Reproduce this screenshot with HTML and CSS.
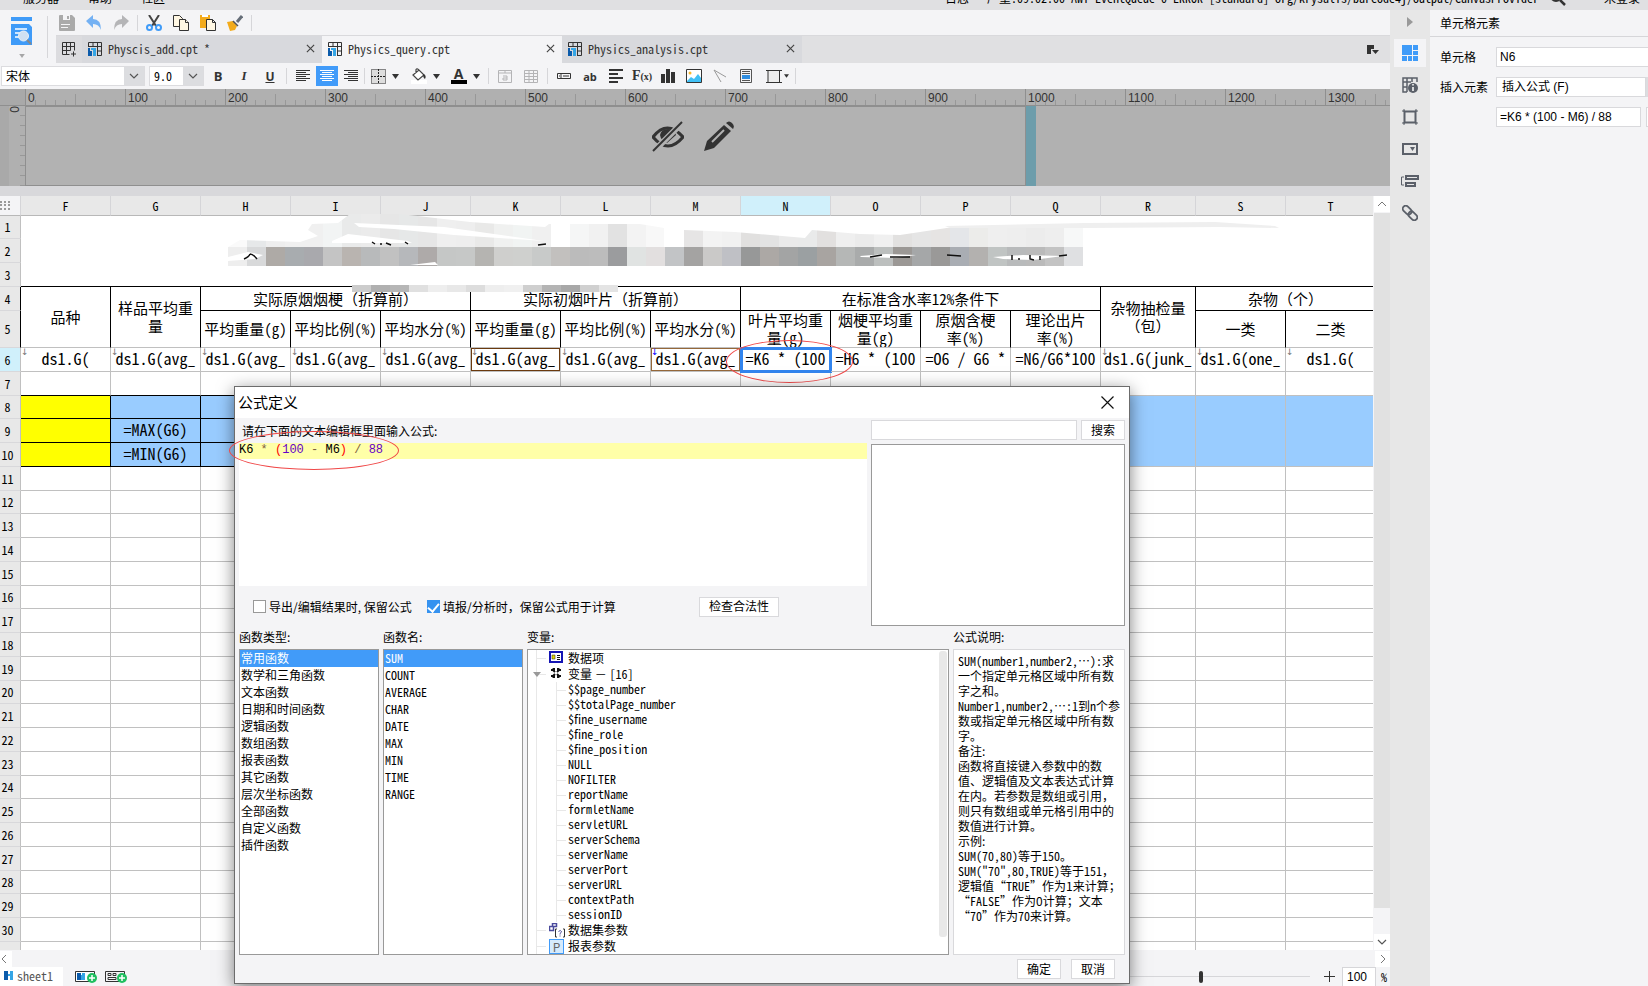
FILE: index.html
```html
<!DOCTYPE html>
<html lang="zh-CN">
<head>
  <meta charset="UTF-8">
  <meta name="viewport" content="width=device-width, initial-scale=1.0">
  <title>Physics_query.cpt</title>
  <link rel="stylesheet" href="styles.css">
</head>
<body>
  <!-- Shared icons -->
  <svg class="defs" width="0" height="0">
    <symbol id="i-cpt" viewBox="0 0 14 14">
      <path d="M.5 5V.5h13v13H9M.5 4.5h13M5 .5v4M9.500.5v13M9 9h4.500" fill="none" stroke="#333" />
      <path d="M0 6h2v3h2v5H0z" fill="#0b5bab" /><path d="M3 6h5v8H5V8H3z" fill="#35a5e5" />
    </symbol>
    <symbol id="i-close" viewBox="0 0 10 10"><path d="M1 1l8 8M9 1L1 9" fill="none" stroke="#444" stroke-width="1.3" /></symbol>
    <symbol id="i-caret" viewBox="0 0 7 5"><path d="M0 0h7L3.500 5z" fill="#333" /></symbol>
    <symbol id="i-down" viewBox="0 0 10 6"><path d="M1 1l4 4 4-4" fill="none" stroke="#555" stroke-width="1.2" /></symbol>
    <symbol id="i-plus" viewBox="0 0 10 10"><circle cx="5" cy="5" r="5" fill="#1fbf5f" /><path d="M5 2v6M2 5h6" stroke="#fff" stroke-width="1.5" /></symbol>
  </svg>

  <div class="app">
    <div class="menubar">
      <div class="menu-line">
        <nav class="menus"><span>服务器</span><span>帮助</span><span>社区</span></nav>
        <span class="log half">日志 &nbsp; 严重:09:02:00 AWT-EventQueue-0 ERROR [standard] org/krysalis/barcode4j/output/CanvasProvider</span>
        <svg class="menu-search" width="16" height="16"><circle cx="6" cy="6" r="5" fill="none" stroke="#333" stroke-width="2" /><path d="M10 10l5 5" stroke="#333" stroke-width="2.500" /></svg>
        <span class="login">未登录</span>
      </div>
    </div>

    <div class="main">
      <div class="workspace">
        <!-- Toolbar and tabs -->
        <div class="top">
          <button type="button" class="preview" aria-label="预览">
            <svg width="22" height="30" viewBox="0 0 22 30">
              <path d="M0 0h21v4H0zM0 7h18l3 3v18H0z" fill="#3f9bf8" /><path d="M4 12h12M4 16h6M4 20h4" stroke="#fff" stroke-width="1.5" />
              <circle cx="12.500" cy="19" r="5" fill="#cfe0f2" stroke="#e9f1f8" /><path d="M16 23l4 4" stroke="#888" stroke-width="2" />
            </svg>
            <svg class="caret-light" width="6" height="4"><use href="#i-caret" /></svg>
          </button>
          <div class="top-right">
            <div class="toolbar">
              <button type="button" aria-label="保存"><svg width="16" height="16"><path d="M0 1q0-1 1-1h12l3 3v12q0 1-1 1H1q-1 0-1-1z" fill="#aaa" /><path d="M4 0h7v5H4zM2 9h9v1H2zM2 12h7v1H2z" fill="#f4f4f6" /><path d="M8 1h2v3H8z" fill="#aaa" /></svg></button>
              <button type="button" aria-label="撤销"><svg width="16" height="16"><path d="M0 6l7-6v4q8 0 8 11-2-6-8-6v4z" fill="#74b1f3" /></svg></button>
              <button type="button" aria-label="重做"><svg width="16" height="16"><path d="M16 6L9 0v4Q1 4 1 15q2-6 8-6v4z" fill="#b5b5b7" /></svg></button>
              <i class="sep"></i>
              <button type="button" aria-label="剪切"><svg width="16" height="16" fill="none"><path d="M3 0l7 11M13 0L6 11" stroke="#444" stroke-width="2" /><circle cx="3.500" cy="12.500" r="2.500" stroke="#3f9bf8" stroke-width="2" /><circle cx="12.500" cy="12.500" r="2.500" stroke="#3f9bf8" stroke-width="2" /></svg></button>
              <button type="button" aria-label="复制"><svg width="16" height="16" fill="#fff7e3" stroke="#333"><path d="M.5.5h6l3 3v8h-9z" /><path d="M6.500 4.500h6l3 3v8h-9z" /><path d="M12.500 4.500v3h3" /></svg></button>
              <button type="button" aria-label="粘贴"><svg width="16" height="16"><path d="M0 0h10v13H0z" fill="#f3ab1b" /><path d="M2 0h6v2H2z" fill="#fff" /><path d="M6.500 4.500h6l3 3v8h-9zM12.500 4.500v3h3" fill="#fff7e3" stroke="#333" /></svg></button>
              <button type="button" aria-label="格式刷"><svg width="16" height="16"><path d="M15 1l-5 6" stroke="#666e78" stroke-width="3" /><path d="M0 7l6-1 4 5-2 4-5 1-1-3z" fill="#f3ab1b" /><path d="M6 6l5 5" stroke="#555" stroke-width="1.500" /></svg></button>
              <i class="sep"></i>
            </div>
            <div class="tabs">
              <button type="button" class="tab-add" aria-label="新建"><svg width="15" height="15" fill="none" stroke="#333"><path d="M.5.5h12v8M.5.5v12h7M.5 4.500h12M.5 8.500h8M4.500.5v12M8.500.5v8M11.500 9.500v5M9 12h5" /></svg></button>
              <div class="tab"><svg width="14" height="14"><use href="#i-cpt" /></svg><span class="half">Physcis_add.cpt *</span><svg class="x" width="9" height="9"><use href="#i-close" /></svg></div>
              <div class="tab active"><svg width="14" height="14"><use href="#i-cpt" /></svg><span class="half">Physics_query.cpt</span><svg class="x" width="9" height="9"><use href="#i-close" /></svg></div>
              <div class="tab"><svg width="14" height="14"><use href="#i-cpt" /></svg><span class="half">Physics_analysis.cpt</span><svg class="x" width="9" height="9"><use href="#i-close" /></svg></div>
              <svg class="tab-list" width="12" height="10"><path d="M0 0h7v4H4v5H0z" fill="#333" /><path d="M5 5h7l-3.500 4z" fill="#333" /></svg>
            </div>
          </div>
        </div>

        <!-- Format bar -->
        <div class="format">
          <div class="combo font-name"><select aria-label="字体"><option>宋体</option></select><svg width="10" height="6"><use href="#i-down" /></svg></div>
          <div class="combo font-size"><select class="half" aria-label="字号"><option>9.0</option></select><svg width="10" height="6"><use href="#i-down" /></svg></div>
          <button type="button" class="bold">B</button>
          <button type="button" class="italic">I</button>
          <button type="button" class="underline">U</button>
          <i class="sep"></i>
          <button type="button" aria-label="左对齐"><svg width="14" height="12" stroke="#333"><path d="M0 .5h14M0 2.500h10M0 4.500h14M0 6.500h10M0 8.500h14M0 10.500h10" /></svg></button>
          <button type="button" class="on" aria-label="居中"><svg width="14" height="12" stroke="#fff"><path d="M0 .5h14M2 2.500h10M0 4.500h14M2 6.500h10M0 8.500h14M2 10.500h10" /></svg></button>
          <button type="button" aria-label="右对齐"><svg width="14" height="12" stroke="#333"><path d="M0 .5h14M4 2.500h10M0 4.500h14M4 6.500h10M0 8.500h14M4 10.500h10" /></svg></button>
          <i class="sep tight"></i>
          <button type="button" class="wide" aria-label="边框"><svg width="15" height="15"><path d="M.5.5h14v14H.5z" fill="#ddd" stroke="#222" stroke-dasharray="1 1" /><path d="M7.500 0v15M0 7.500h15" stroke="#222" stroke-dasharray="2 1" /></svg><svg width="7" height="5"><use href="#i-caret" /></svg></button>
          <button type="button" class="wide" aria-label="填充"><svg width="16" height="16"><path d="M0 12h16v4H0z" fill="#fff" /><path d="M2 7l6-5 5 5-6 5zM5 5V1.500Q6 0 8 2" fill="#fff" stroke="#444" stroke-width="1.200" /><path d="M12 6q4 1 2 5-2-1-2-5z" fill="#333" /></svg><svg width="7" height="5"><use href="#i-caret" /></svg></button>
          <button type="button" class="wide" aria-label="字体颜色"><span class="font-color">A</span><svg width="7" height="5"><use href="#i-caret" /></svg></button>
          <i class="sep"></i>
          <button type="button" aria-label="合并"><svg width="14" height="13" fill="none" stroke="#b4b4b6"><path d="M.5.5h13v12H.5zM.5 3h13M7 0v3M5 6h4v4H5V8h4" /></svg></button>
          <button type="button" aria-label="取消合并"><svg width="14" height="13" fill="none" stroke="#b4b4b6"><path d="M.5.5h13v12H.5zM.5 3.500h13M.5 6.500h13M.5 9.500h13M5 .5v12M9.500.5v12" /></svg></button>
          <i class="sep"></i>
          <button type="button" aria-label="控件"><svg width="14" height="6" fill="none" stroke="#333"><path d="M.5.5h13v5H.5zM4 1v4M6 3h6M2 3h1" /></svg></button>
          <button type="button" class="text-ab">ab</button>
          <button type="button" aria-label="富文本"><svg width="14" height="14" stroke="#333" stroke-width="2"><path d="M0 1h14M0 5h9M0 9h14M0 13h9" /></svg></button>
          <button type="button" class="text-fx">F<small>(x)</small></button>
          <button type="button" aria-label="图表"><svg width="14" height="14" fill="#333"><path d="M0 5h4v9H0zM5 0h4v14H5zM10 3h4v11h-4z" /></svg></button>
          <button type="button" aria-label="图片"><svg width="16" height="14"><path d="M.5.5h15v13H.5z" fill="#fff" stroke="#333" /><circle cx="4" cy="4" r="1.500" fill="#f9b82c" /><path d="M1 12l4-4 3 2 4-5 3 4v4H1z" fill="#40c0f5" /></svg></button>
          <button type="button" aria-label="斜线"><svg width="14" height="14" stroke="#999" fill="none"><path d="M13 8L1 1l7 12" /></svg></button>
          <button type="button" aria-label="子报表"><svg width="12" height="14" fill="none" stroke="#555"><path d="M.5.5h11v13H.5zM2 2.500h8M2 4.500h8M2 11.500h8" /><path d="M2 6h8v4H2z" fill="#2f8de0" stroke="none" /></svg></button>
          <button type="button" class="frame-btn" aria-label="悬浮元素"><svg width="16" height="15"><path d="M2 1.500h11.500v12H2z" fill="#eee" stroke="#333" /><path d="M0 1.500h3M12 1.500h4M0 13.500h3M12 13.500h4" stroke="#333" /></svg><svg width="5" height="4"><use href="#i-caret" /></svg></button>
          <i class="sep tight"></i>
        </div>

        <!-- Parameter pane -->
        <div class="ruler"><div class="ruler-scale" id="ruler"></div></div>
        <div class="param">
          <div class="ruler-v"><span>0</span></div>
          <div class="param-canvas">
            <svg width="32" height="32" viewBox="0 0 32 32"><path d="M1 16q14-18 30 0-15 18-30 0z" fill="none" stroke="#333" stroke-width="3" /><path d="M8 14q1-6 8-6 7 0 8 6l-9 8q-6-2-7-8z" fill="#333" /><path d="M31 1L1 31" stroke="#b2b2b2" stroke-width="6" /><path d="M30 1L1 30" stroke="#333" stroke-width="2" /></svg>
            <svg width="30" height="30" viewBox="0 0 30 30"><path d="M0 30l3-10L20 4l7 6-17 17z" fill="#333" /><path d="M8 21L20 9" stroke="#b2b2b2" stroke-width="2" /><path d="M22 2q3-3 6 0t1 6z" fill="#333" /></svg>
          </div>
          <div class="param-handle"></div>
        </div>
        <div class="band"></div>

        <!-- Report grid -->
        <div class="sheet-area">
          <div class="sheet">
            <table>
              <colgroup><col class="c-head"><col><col><col><col><col><col><col><col><col><col><col><col><col class="c-r"><col><col></colgroup>
              <thead>
                <tr><th class="corner"><svg width="11" height="9" fill="#999"><path d="M0 0h2v2H0zM4 0h2v2H4zM8 0h2v2H8zM0 3h2v2H0zM4 3h2v2H4zM8 3h2v2H8zM0 7h2v2H0zM4 7h2v2H4zM8 7h2v2H8z" /></svg></th><th>F</th><th>G</th><th>H</th><th>I</th><th>J</th><th>K</th><th>L</th><th>M</th><th class="cur">N</th><th>O</th><th>P</th><th>Q</th><th>R</th><th>S</th><th>T</th></tr>
              </thead>
              <tbody id="rows">
                <tr><th>1</th><td class="title-cell dark" colspan="15" rowspan="3"></td></tr>
                <tr><th>2</th></tr>
                <tr><th>3</th></tr>
                <tr class="cap"><th>4</th><td rowspan="2">品种</td><td rowspan="2">样品平均重量</td><td colspan="3" class="dark">实际原烟烟梗（折算前）</td><td colspan="3" class="dark">实际初烟叶片（折算前）</td><td colspan="4" class="dark">在标准含水率<span class="half">12%</span>条件下</td><td rowspan="2">杂物抽检量（包）</td><td colspan="2" class="dark">杂物（个）</td></tr>
                <tr class="cap tall half"><th>5</th><td>平均重量(g)</td><td>平均比例(%)</td><td>平均水分(%)</td><td>平均重量(g)</td><td>平均比例(%)</td><td>平均水分(%)</td><td>叶片平均重<br>量(g)</td><td>烟梗平均重<br>量(g)</td><td>原烟含梗<br>率(%)</td><td>理论出片<br>率(%)</td><td>一类</td><td>二类</td></tr>
                <tr class="code"><th class="cur">6</th><td class="ds">ds1.G(</td><td class="ds">ds1.G(avg_</td><td class="ds">ds1.G(avg_</td><td class="ds">ds1.G(avg_</td><td class="ds">ds1.G(avg_</td><td class="ds ref-k">ds1.G(avg_</td><td class="ds">ds1.G(avg_</td><td class="ds ref-m">ds1.G(avg_</td><td class="selected">=K6 * (100</td><td>=H6 * (100</td><td>=O6 / G6 *</td><td>=N6/G6*100</td><td class="ds">ds1.G(junk_</td><td class="ds">ds1.G(one_</td><td class="ds">ds1.G(</td></tr>
                <tr class="pre"><th>7</th><td></td><td></td><td></td><td></td><td></td><td></td><td></td><td></td><td></td><td></td><td></td><td></td><td class="plain"></td><td class="plain"></td><td class="plain"></td></tr>
                <tr class="stat code"><th>8</th><td class="yellow"></td><td></td><td></td><td></td><td></td><td></td><td></td><td></td><td></td><td></td><td></td><td></td><td rowspan="3" class="plain"></td><td rowspan="3" class="plain"></td><td rowspan="3" class="plain"></td></tr>
                <tr class="stat code"><th>9</th><td class="yellow"></td><td>=MAX(G6)</td><td></td><td></td><td></td><td></td><td></td><td></td><td></td><td></td><td></td><td></td></tr>
                <tr class="stat code"><th>10</th><td class="yellow"></td><td>=MIN(G6)</td><td></td><td></td><td></td><td></td><td></td><td></td><td></td><td></td><td></td><td></td></tr>
              </tbody>
            </table>
            <svg class="mosaic" width="1100" height="80" viewBox="200 210 1100 80">
              <defs><clipPath id="smear"><path d="M228 247l12-7 60 2 18-6-10-6 4-6 26-1 12-9h50l70 8 75 5 4-3h91l24 4v19h20v-17l51 2 70 6 7-8 48 4 40 1 60-9h123v21z" /></clipPath></defs>
              <g id="mosaic-top" clip-path="url(#smear)"></g>
              <g id="mosaic"></g>
              <path d="M945 226l140-3 130-1 60 4 4 2-60-1-130 1H950z" fill="#efefef" />
              <path d="M354 223l90 4 100 14-90-6-60-6-35-2zM332 241l16-7 60 7 4 2h-80z" fill="#fff" />
              <path d="M228 257l20-5 15 3-8 4-27 2zM860 256l26-2 30 1-20 3-35-1zM993 257l30-2 40 1-30 4-30-1zM410 265l25-3 3 3z" fill="#fff" />
              <path d="M244 259q5-2 6-5m0 0q3 0 7 5M372 242l3 2m6-1v2m5-2l5 2m14-3l3 2M538 245l8-1M870 257l12-2m8 2h20M1012 255v5m7-2v2m11-5v4l4 1m6-4v4m19-4l8-1M947 255l14 1" fill="none" stroke="#111" stroke-width="1.500" />
            </svg>
            <svg class="mosaic-low" width="266" height="7" id="mosaic-low"></svg>
          </div>
          <div class="vscroll">
            <button type="button" aria-label="向上"><svg width="10" height="6" viewBox="0 0 10 6"><path d="M1 5l4-4 4 4" fill="none" stroke="#777" /></svg></button>
            <div class="vthumb"></div>
            <button type="button" aria-label="向下"><svg width="10" height="6"><use href="#i-down" /></svg></button>
          </div>
          <div class="mark mark-cell"></div>
        </div>
        <div class="hscroll">
          <button type="button" class="h-left" aria-label="向左"><svg width="6" height="10"><path d="M5 1L1 5l4 4" fill="none" stroke="#777" /></svg></button>
          <button type="button" aria-label="向右"><svg width="6" height="10"><path d="M1 1l4 4-4 4" fill="none" stroke="#777" /></svg></button>
        </div>
        <div class="sheetbar">
          <div class="sheet-tab"><svg width="9" height="9"><path d="M0 0h4v9H0z" fill="#0b5bab" /><path d="M4 3h2V0h3v9H6V5H4z" fill="#35a5e5" /></svg><span class="half">sheet1</span></div>
          <button type="button" aria-label="新建sheet"><svg width="22" height="14"><path d="M.5 1.500h19v10H.5z" fill="#fff" stroke="#333" /><path d="M2 3h4v7H2z" fill="#0b5bab" /><path d="M6 5h1V3h3v7H6z" fill="#35a5e5" /><use href="#i-plus" x="12" y="3" width="10" height="10" /></svg></button>
          <button type="button" aria-label="新建表单"><svg width="22" height="14"><path d="M.5 1.500h19v10H.5zM3 3.500h3v2H3zM8 3.500h3v2H8zM3 7.500h8v2H3z" fill="none" stroke="#333" /><use href="#i-plus" x="12" y="3" width="10" height="10" /></svg></button>
          <input type="range" class="zoom" min="10" max="400" value="206" aria-label="缩放">
          <svg class="zoom-in" width="11" height="11"><path d="M5.500 0v11M0 5.500h11" stroke="#333" /></svg>
          <input type="text" class="zoom-value" value="100" aria-label="缩放比例"><span class="half">%</span>
        </div>
      </div>

      <!-- Property rail -->
      <div class="rail">
        <svg class="rail-arrow" width="6" height="10"><path d="M0 0l6 5-6 5z" fill="#999" /></svg>
        <button type="button" class="active" aria-label="单元格元素"><svg width="16" height="16" fill="#3f9bf8"><path d="M0 0h10v10H0zM11 0h5v5h-5zM11 6h5v4h-5zM0 11h5v5H0zM6 11h4v5H6zM11 11h5v5h-5z" /></svg></button>
        <button type="button" aria-label="单元格属性"><svg width="16" height="16" fill="none" stroke="#5b6069" stroke-width="1.500"><path d="M5 15H1V1h14v4M1 5h8M5 1v14M10 1v4M1 10h4" /><circle cx="11" cy="11" r="5" fill="#5b6069" stroke="none" /><path d="M11 10v4M11 7v1.500" stroke="#fff" /></svg></button>
        <button type="button" aria-label="悬浮元素"><svg width="16" height="16" fill="none" stroke="#5b6069" stroke-width="2"><path d="M2.500 2.500h11v11h-11z" /><path d="M0 2h3M13 2h3M0 14h3M13 14h3M2 0v3M14 0v3M2 13v3M14 13v3" stroke-width="1" /></svg></button>
        <button type="button" aria-label="控件设置"><svg width="16" height="12" fill="none" stroke="#5b6069" stroke-width="2"><path d="M1 1h14v10H1z" /><path d="M8 4h5l-2.500 4z" fill="#5b6069" stroke="none" /></svg></button>
        <button type="button" aria-label="条件属性"><svg width="18" height="12" fill="none" stroke="#5b6069" stroke-width="2"><path d="M5 1h12v3H5zM5 8h9v3H5z" /><path d="M3 2H.5v8H3" stroke-width="1" /></svg></button>
        <button type="button" aria-label="超级链接"><svg width="16" height="16" fill="none" stroke="#5b6069" stroke-width="1.800"><g transform="rotate(45 8 8)"><rect x="-1" y="5" width="10" height="6" rx="3" /><rect x="7" y="5" width="10" height="6" rx="3" /></g></svg></button>
      </div>

      <div class="panel">
        <h2>单元格元素</h2>
        <div class="field"><label for="cell">单元格</label><input type="text" id="cell" value="N6"></div>
        <div class="field"><label for="insert">插入元素</label><select id="insert"><option>插入公式 (F)</option></select><i class="more"></i></div>
        <div class="field"><label for="formula"></label><input type="text" id="formula" aria-label="公式" class="formula-input" value="=K6 * (100 - M6) / 88"><i class="more edit"></i></div>
      </div>
    </div>
  </div>

  <!-- Formula dialog -->
  <div class="dialog" role="dialog" aria-labelledby="dialog-title">
    <div class="dialog-title">
      <h1 id="dialog-title">公式定义</h1>
      <button type="button" aria-label="关闭"><svg width="13" height="13"><path d="M.5.5l12 12M12.500.5l-12 12" stroke="#111" stroke-width="1.200" /></svg></button>
    </div>
    <div class="dialog-body">
      <div class="edit-row">
        <div class="edit-left">
          <p class="hint">请在下面的文本编辑框里面输入公式:</p>
          <div class="editor" contenteditable="true" spellcheck="false"><div class="line">K6 <b>*</b> <em>(</em><i>100</i> <b>-</b> M6<em>)</em> <b>/</b> <i>88</i></div></div>
          <div class="options">
            <label><input type="checkbox">导出/编辑结果时, 保留公式</label>
            <label><input type="checkbox" checked>填报/分析时，保留公式用于计算</label>
            <button type="button" class="btn check-btn">检查合法性</button>
          </div>
        </div>
        <div class="edit-right">
          <div class="search-row"><input type="text" aria-label="搜索"><button type="button" class="btn">搜索</button></div>
          <div class="result"></div>
        </div>
      </div>

      <div class="lists">
        <section>
          <h3>函数类型:</h3>
          <ul class="box list" role="listbox"><li class="sel">常用函数</li><li>数学和三角函数</li><li>文本函数</li><li>日期和时间函数</li><li>逻辑函数</li><li>数组函数</li><li>报表函数</li><li>其它函数</li><li>层次坐标函数</li><li>全部函数</li><li>自定义函数</li><li>插件函数</li></ul>
        </section>
        <section>
          <h3>函数名:</h3>
          <ul class="box list half" role="listbox"><li class="sel">SUM</li><li>COUNT</li><li>AVERAGE</li><li>CHAR</li><li>DATE</li><li>MAX</li><li>MIN</li><li>TIME</li><li>RANGE</li></ul>
        </section>
        <section>
          <h3>变量:</h3>
          <div class="box tree-box">
            <ul class="tree">
              <li class="node"><svg width="14" height="12"><path d="M1 1h12v10H1z" fill="#fff" stroke="#1414b4" stroke-width="2" /><path d="M3 4h3v4H3z" fill="#e5d800" stroke="#222" stroke-width=".5" /><path d="M8 4.500h3M8 6.500h3M8 8.500h3" stroke="#111" /></svg>数据项</li>
              <li class="node open"><svg width="14" height="12"><path d="M3 2l3 3M11 2L8 5M3 10l3-3M11 10L8 7M5 1v2H2M9 1v2h3M5 11V9H2M9 11V9h3" fill="none" stroke="#111" stroke-width="2" /></svg>变量 － <span class="half">[16]</span>
                <ul class="half">
                  <li>$$page_number</li><li>$$totalPage_number</li><li>$fine_username</li><li>$fine_role</li><li>$fine_position</li><li>NULL</li><li>NOFILTER</li><li>reportName</li><li>formletName</li><li>servletURL</li><li>serverSchema</li><li>serverName</li><li>serverPort</li><li>serverURL</li><li>contextPath</li><li>sessionID</li>
                </ul>
              </li>
              <li class="node"><svg width="16" height="15" fill="none" stroke="#4a4a9c"><path d="M3.500.5h4v3h-4zM.5 3.500h4v4h-4z" stroke-width="1.500" /><path d="M8 6H6.500v8H8M14 6h1.500v8H14" stroke="#333" /><path d="M9.500 8.500q2-2 3 0 0 1-1.500 2v1m0 1v1" /></svg>数据集参数</li>
              <li class="node"><span class="p-icon">P</span>报表参数</li>
            </ul>
            <div class="tree-scroll"></div>
          </div>
        </section>
        <section>
          <h3>公式说明:</h3>
          <div class="box desc"><span class="half">SUM(number1,number2,</span>…<span class="half">):</span>求<br>一个指定单元格区域中所有数<br>字之和。<br><span class="half">Number1,number2,</span>…<span class="half">:1</span>到<span class="half">n</span>个参<br>数或指定单元格区域中所有数<br>字。<br>备注:<br>函数将直接键入参数中的数<br>值、逻辑值及文本表达式计算<br>在内。若参数是数组或引用，<br>则只有数组或单元格引用中的<br>数值进行计算。<br>示例:<br><span class="half">SUM(70,80)</span>等于<span class="half">150</span>。<br><span class="half">SUM("70",80,TRUE)</span>等于<span class="half">151</span>，<br>逻辑值“<span class="half">TRUE</span>”作为1来计算；<br>“<span class="half">FALSE</span>”作为0计算；文本<br>“<span class="half">70</span>”作为<span class="half">70</span>来计算。</div>
        </section>
      </div>
      <div class="actions"><button type="button" class="btn">确定</button><button type="button" class="btn">取消</button></div>
    </div>
    <div class="mark mark-formula"></div>
  </div>

  <script src="script.js"></script>
</body>
</html>
```
FILE: styles.css
```css
* {
  margin: 0;
  padding: 0;
  box-sizing: border-box;
}

body {
  font-family: "Noto Sans CJK SC", sans-serif;
  font-size: 12px;
  line-height: 16px;
  color: #000;
  background-color: #f4f4f6;
  overflow: hidden;
}

button,
input,
select {
  font: inherit;
  color: inherit;
  border: none;
  border-radius: 0;
  background: none;
  outline: none;
  appearance: none;
}

button {
  display: flex;
  align-items: center;
  justify-content: center;
}

svg {
  display: block;
  flex: none;
}

ul {
  list-style: none;
}

.defs {
  position: absolute;
}

/* Half-width latin glyphs */
.half,
.code,
thead th,
tbody th {
  font-feature-settings: "hwid";
}

.app {
  display: flex;
  flex-direction: column;
  height: 100vh;
}

/* Menu bar, scrolled partly out of view */
.menubar {
  height: 10px;
  flex: none;
  background-color: #e0e0e2;
  overflow: hidden;
}

.menu-line {
  display: flex;
  align-items: center;
  height: 16px;
  margin-top: -10px;
  padding: 0 8px 0 23px;
  white-space: nowrap;
}

.menus {
  display: flex;
  gap: 29px;
  flex: 1;
}

.menu-search {
  margin: 0 38px 0 11px;
}

.main {
  display: flex;
  flex: 1;
  min-height: 0;
}

.workspace {
  display: flex;
  flex-direction: column;
  flex: 1;
  min-width: 0;
}

.sep {
  width: 1px;
  height: 16px;
  background-color: #d6d6d9;
  flex: none;
}

/* Toolbar and tabs */
.top {
  display: flex;
  flex: none;
}

.preview {
  flex-direction: column;
  gap: 7px;
  width: 56px;
  padding: 2px 13px 0 0;
  position: relative;
}

.preview::after {
  content: "";
  position: absolute;
  left: 47px;
  top: 6px;
  width: 1px;
  height: 42px;
  background-color: #d6d6d9;
}

.caret-light {
  opacity: 0.4;
}

.top-right {
  flex: 1;
}

.toolbar {
  display: flex;
  align-items: center;
  gap: 11px;
  height: 25px;
  padding: 0 3px;
}

.toolbar .sep {
  margin: 0 -3px;
}

.tabs {
  display: flex;
  align-items: center;
  height: 28px;
  background-color: #e0e0e2;
  border-top: 1px solid #d9d9dc;
}

.tab-add {
  width: 26px;
  height: 27px;
  background-color: #dcdcdf;
}

.tab {
  display: flex;
  align-items: center;
  gap: 6px;
  width: 240px;
  height: 27px;
  padding: 0 7px 2px 6px;
  background-color: #d8d9dd;
  color: #333;
}

.tab.active {
  background-color: #f4f4f6;
}

.tab .x {
  margin-left: auto;
}

.tab-list {
  margin: 0 11px 0 auto;
}

/* Format bar */
.format {
  display: flex;
  align-items: center;
  height: 26px;
  flex: none;
  padding-left: 1px;
}

.combo {
  display: flex;
  align-items: center;
  position: relative;
  height: 20px;
  border: 1px solid #dcdcdf;
}

.combo select {
  width: 100%;
  height: 18px;
  padding-left: 4px;
  background: linear-gradient(to left, #dcdde0 20px, #fff 20px);
}

.combo svg {
  position: absolute;
  right: 5px;
}

.font-name {
  width: 144px;
  margin-right: 4px;
}

.font-size {
  width: 55px;
  margin-right: 1px;
}

.format button {
  width: 26px;
  height: 20px;
  color: #333;
}

.format .sep {
  margin: 0 3px;
}

.format .tight {
  margin: 0;
}

.format .bold {
  font: bold 13px "Open Sans", sans-serif;
}

.format .italic {
  font: italic bold 13px "Liberation Serif", serif;
}

.format .underline {
  font: bold 12px "Open Sans", sans-serif;
  text-decoration: underline;
}

.format .on {
  width: 22px;
  background-color: #419bf9;
}

.format .wide {
  width: 40px;
  gap: 6px;
}

.font-color {
  width: 16px;
  border-bottom: 4px solid #000;
  font: bold 14px/12px "Open Sans", sans-serif;
}

.format .text-ab {
  font: bold 11px "Open Sans", sans-serif;
}

.format .text-fx {
  font: bold 14px "Liberation Serif", serif;
}

.text-fx small {
  font-size: 10px;
}

.format .frame-btn {
  gap: 2px;
  width: 36px;
}

/* Parameter pane */
.ruler {
  height: 17px;
  flex: none;
  padding-left: 25px;
  background-color: #a9a9a9;
  border-bottom: 1px solid #8f8f8f;
}

.ruler-scale {
  display: flex;
  height: 16px;
  overflow: hidden;
  background:
    repeating-linear-gradient(to right, #8f8f8f 0 1px, transparent 1px 100px),
    repeating-linear-gradient(to right, #989898 0 1px, transparent 1px 50px) 0 100% / 100% 11px no-repeat,
    repeating-linear-gradient(to right, #989898 0 1px, transparent 1px 10px) 0 100% / 100% 5px no-repeat,
    #b0b0b0;
}

.ruler-scale span {
  width: 100px;
  flex: none;
  padding-left: 3px;
  font: 12px/18px "Liberation Sans", sans-serif;
  color: #333;
}

.param {
  display: flex;
  height: 80px;
  flex: none;
  background-color: #b1b1b1;
}

.ruler-v {
  width: 26px;
  padding: 0 0 0 9px;
  background:
    repeating-linear-gradient(to bottom, transparent 0 9px, #989898 9px 10px) 100% 0 / 5px 100% no-repeat,
    linear-gradient(to right, #a9a9a9 9px, #b0b0b0 9px);
  border-right: 1px solid #8f8f8f;
}

.ruler-v span {
  display: block;
  writing-mode: vertical-rl;
  transform: rotate(180deg);
  font: 12px/12px "Liberation Sans", sans-serif;
  color: #333;
}

.param-canvas {
  display: flex;
  justify-content: center;
  gap: 20px;
  width: 1000px;
  padding: 14px 0 0 334px;
  background-color: #b2b2b2;
  border: 1px solid #8f8f8f;
  border-left: none;
}

.param-handle {
  width: 10px;
  background-color: #6d9dab;
}

.band {
  height: 10px;
  flex: none;
  background-color: #d8d8db;
}

/* Report grid */
.sheet-area {
  display: flex;
  flex: 1;
  min-height: 0;
  position: relative;
}

.sheet {
  flex: 1;
  overflow: hidden;
  position: relative;
  background-color: #fff;
}

.sheet table {
  width: 1376px;
  table-layout: fixed;
  border-collapse: separate;
  border-spacing: 0;
}

.sheet col {
  width: 90px;
}

.sheet .c-head {
  width: 21px;
}

.sheet .c-r {
  width: 95px;
}

.sheet th {
  height: 24px;
  background-color: #e8e8e8;
  border-right: 1px solid #c0c0c0;
  border-bottom: 1px solid #d8d8db;
  font-weight: normal;
}

.sheet thead th {
  height: 20px;
  line-height: 18px;
  border-right-color: #d5d5d8;
  border-bottom-color: #b8b8b8;
}

.sheet tbody th {
  padding-right: 5px;
}

.sheet thead .corner {
  background-color: #f4f4f6;
}

.sheet th.cur {
  background-color: #d0f0fb;
}

.sheet td {
  border-right: 1px solid #c0c0c0;
  border-bottom: 1px solid #c0c0c0;
  text-align: center;
  overflow: hidden;
  line-height: 18px;
}

.sheet tbody tr:nth-child(1) th,
.sheet tbody tr:nth-child(4n + 8) th {
  height: 23px;
}

.sheet tbody .tall th {
  height: 37px;
}

.sheet .title-cell {
  border-right: none;
}

.sheet .cap th {
  border-right-color: #000;
}

.sheet .cap td {
  font-size: 15px;
  border-right-color: #000;
}

.sheet td.dark,
.sheet .pre td,
.sheet .stat td {
  border-bottom-color: #000;
}

.sheet .code td {
  font-size: 16px;
  line-height: 18px;
  padding-bottom: 3px;
  white-space: nowrap;
  position: relative;
}

.sheet .stat td {
  background-color: #99ccff;
  border-right-color: #000;
}

.sheet .stat .yellow {
  background-color: #ff0;
}

.sheet td.plain,
.sheet .stat td.plain {
  border-color: #c0c0c0;
}

.ds::before {
  content: "↓";
  position: absolute;
  left: 0;
  top: 0;
  font: 9px/8px "DejaVu Sans", sans-serif;
  color: #777;
}

.sheet .ref-k {
  box-shadow: inset 0 0 0 1px #6b3a0e;
}

.sheet .ref-m {
  box-shadow: inset 0 0 0 1px #95683a;
}

.sheet .ref-m::before {
  color: #00f;
}

.sheet td.selected {
  overflow: visible;
}

.selected::after {
  content: "";
  position: absolute;
  inset: -1px -2px -2px -1px;
  border: 3px solid #3385ee;
}

.mosaic {
  position: absolute;
  left: 200px;
  top: 14px;
}

.mosaic-low {
  position: absolute;
  left: 352px;
  top: 89px;
}

.vscroll {
  display: flex;
  flex-direction: column;
  width: 17px;
  padding-left: 1px;
}

.vscroll button {
  height: 16px;
  background-color: #fff;
}

.vthumb {
  flex: 1;
  margin: 1px 0 26px;
  background-color: #e1e1e1;
}

.hscroll {
  display: flex;
  justify-content: space-between;
  height: 17px;
  flex: none;
  padding-top: 1px;
}

.hscroll button {
  width: 15px;
  background-color: #fff;
}

.hscroll .h-left {
  width: 12px;
  padding-right: 4px;
}

.sheetbar {
  display: flex;
  align-items: center;
  height: 19px;
  flex: none;
  padding-right: 3px;
}

.sheet-tab {
  display: flex;
  align-items: center;
  gap: 4px;
  width: 63px;
  height: 19px;
  margin-right: 12px;
  padding: 0 0 2px 4px;
  background-color: #fff;
  color: #555;
}

.sheetbar button {
  margin-right: 8px;
}

.zoom {
  width: 220px;
  height: 12px;
  margin-left: auto;
  background: linear-gradient(#d6d6d9, #d6d6d9) 0 50% / 100% 1px no-repeat;
}

.zoom::-webkit-slider-thumb {
  appearance: none;
  width: 4px;
  height: 12px;
  border-radius: 2px;
  background-color: #333;
}

.zoom-in {
  margin: 0 7px 0 14px;
}

.zoom-value {
  width: 34px;
  height: 19px;
  margin-right: 5px;
  padding-left: 4px;
  background-color: #fff;
  border: 1px solid #d6d6d9;
  border-bottom: none;
  font-family: "Liberation Sans", sans-serif;
}

/* Property rail */
.rail {
  display: flex;
  flex-direction: column;
  align-items: center;
  gap: 4px;
  width: 40px;
  flex: none;
  background-color: #e7e7e7;
}

.rail-arrow {
  margin: 7px 0 8px;
}

.rail button {
  width: 32px;
  height: 28px;
}

.rail .active {
  background-color: #f4f4f6;
}

/* Property panel */
.panel {
  width: 218px;
  flex: none;
  overflow: hidden;
}

.panel h2 {
  height: 27px;
  margin-bottom: 10px;
  padding-left: 10px;
  border-bottom: 1px solid #d6d6d9;
  font-size: 12px;
  font-weight: normal;
  line-height: 26px;
}

.field {
  display: flex;
  align-items: center;
  margin-bottom: 10px;
  padding-left: 10px;
}

.field label {
  width: 56px;
  flex: none;
}

.field input,
.field select {
  width: 160px;
  height: 20px;
  flex: none;
  padding-left: 3px;
  background-color: #fff;
  border: 1px solid #d9d9dc;
  font-family: "Liberation Sans", "Noto Sans CJK SC", sans-serif;
}

.field select {
  width: 150px;
  padding-left: 5px;
}

.field .formula-input {
  width: 145px;
  margin-right: 5px;
}

.more {
  width: 20px;
  height: 20px;
  flex: none;
  background-color: #dcdde0;
}

.more.edit {
  background-color: #fff;
  border: 1px solid #d9d9dc;
}

/* Formula dialog */
.dialog {
  position: absolute;
  left: 234px;
  top: 386px;
  width: 896px;
  border: 1px solid #6c6c6c;
  background-color: #f4f4f6;
  box-shadow: 0 4px 16px rgba(0, 0, 0, 0.5);
}

.dialog-title {
  display: flex;
  align-items: center;
  justify-content: space-between;
  height: 31px;
  padding: 0 15px 1px 3px;
  background-color: #fff;
}

.dialog-title h1 {
  font-size: 15px;
  font-weight: normal;
}

.dialog-body {
  padding: 0 4px 4px;
}

.edit-row {
  display: flex;
  gap: 4px;
}

.edit-left {
  flex: 1;
}

.hint {
  height: 25px;
  padding-left: 3px;
  line-height: 25px;
}

.editor {
  height: 143px;
  background-color: #fff;
  font: 12px/15px "Liberation Mono", monospace;
  outline: none;
}

.editor .line {
  height: 16px;
  background-color: #ffffa8;
}

.editor b {
  font-weight: normal;
  color: #806040;
}

.editor em {
  font-style: normal;
  color: #f00;
}

.editor i {
  font-style: normal;
  color: #6400c8;
}

.options {
  display: flex;
  align-items: center;
  height: 41px;
  padding-left: 14px;
}

.options label {
  display: flex;
  align-items: center;
  gap: 3px;
  width: 174px;
  white-space: nowrap;
}

.options input {
  width: 13px;
  height: 13px;
  flex: none;
  background-color: #fff;
  border: 1px solid #999;
}

.options input:checked {
  border-color: #3592f0;
  background-color: #3592f0;
  display: grid;
  place-items: center;
}

.options input:checked::before {
  content: "";
  width: 5px;
  height: 9px;
  margin-bottom: 2px;
  border: solid #fff;
  border-width: 0 2px 2px 0;
  transform: rotate(40deg);
}

.btn {
  width: 44px;
  height: 20px;
  padding-bottom: 1px;
  background-color: #fff;
  border: 1px solid #d9d9dc;
}

.check-btn {
  width: 80px;
  margin-left: 98px;
}

.edit-right {
  width: 254px;
  padding-top: 2px;
}

.search-row {
  display: flex;
  gap: 4px;
  margin-bottom: 4px;
}

.search-row input {
  flex: 1;
  min-width: 0;
  background-color: #fff;
  border: 1px solid #d9d9dc;
}

.result {
  height: 182px;
  background-color: #fff;
  border: 1px solid #999;
}

.lists {
  display: grid;
  grid-template-columns: 140px 140px 1fr 172px;
  gap: 4px;
}

.lists h3 {
  height: 22px;
  font-size: 12px;
  font-weight: normal;
  line-height: 20px;
}

.box {
  height: 306px;
  background-color: #fff;
  border: 1px solid #999;
  overflow: hidden;
}

.list li {
  height: 17px;
  padding-left: 1px;
  line-height: 15px;
}

.list .sel {
  background-color: #419bf9;
  color: #fff;
}

.tree-box {
  display: flex;
  justify-content: space-between;
}

.tree {
  margin-left: 8px;
  border-left: 1px solid #e8e8e8;
}

.tree .node {
  position: relative;
  padding-left: 31px;
  line-height: 16px;
}

.tree .node::before,
.tree .node li::before {
  content: "";
  position: absolute;
  left: 0;
  top: 8px;
  width: 9px;
  border-top: 1px solid #e8e8e8;
}

.tree .open::after {
  content: "";
  position: absolute;
  left: -4px;
  top: 6px;
  border: 4px solid transparent;
  border-top: 5px solid #999;
}

.tree .node > svg,
.p-icon {
  position: absolute;
  left: 12px;
  top: 1px;
}

.p-icon {
  width: 15px;
  height: 15px;
  border: 1px solid #419bf9;
  background-color: #d5eafc;
  color: #666;
  line-height: 13px;
  text-align: center;
}

.tree .node ul {
  margin-left: -12px;
  border-left: 1px solid #e8e8e8;
}

.tree .node li {
  position: relative;
  height: 15px;
  padding-left: 11px;
  line-height: 13px;
}

.tree-scroll {
  width: 8px;
  margin: 1px 1px 17px 0;
  border-radius: 3px;
  background-color: #e8e8e8;
}

.desc {
  padding: 3px 4px;
  border-color: #d9d9dc;
  line-height: 15px;
  white-space: nowrap;
}

.actions {
  display: flex;
  justify-content: flex-end;
  gap: 10px;
  padding: 4px 10px 0;
}

/* Red annotation rings */
.mark {
  position: absolute;
  border: 1px solid #f04848;
  border-radius: 50%;
  pointer-events: none;
}

.mark-cell {
  left: 726px;
  top: 144px;
  width: 127px;
  height: 43px;
}

.mark-formula {
  left: -6px;
  top: 44px;
  width: 170px;
  height: 39px;
}
```
FILE: script.js
```js
// Ruler labels
const ruler = document.getElementById("ruler");
for (let n = 0; n <= 1300; n += 100) {
  const label = document.createElement("span");
  label.textContent = n;
  ruler.appendChild(label);
}

// Empty rows below the report content
const rows = document.getElementById("rows");
for (let n = 11; n <= 31; n++) {
  const tr = document.createElement("tr");
  tr.innerHTML = "<th>" + (n < 31 ? n : "") + "</th>" + "<td></td>".repeat(15);
  rows.appendChild(tr);
}

// Mosaic blocks over the report title
function blocks(id, x, y, width, height, colors) {
  const group = document.getElementById(id);
  colors.split(" ").forEach((color, i) => {
    const rect = document.createElementNS("http://www.w3.org/2000/svg", "rect");
    rect.setAttribute("x", x + i * width);
    rect.setAttribute("y", y);
    rect.setAttribute("width", width);
    rect.setAttribute("height", height);
    rect.setAttribute("fill", "#" + color);
    group.appendChild(rect);
  });
}

blocks("mosaic", 228, 247, 19, 19,
  "eeeeee d8d9da aeaaa6 a8acaf a9a9ad c4c4c4 b9b4b0 b8babb c1c1c1 b6b8bb aeaaa9 c5c7c6 " +
  "c6c8c7 b5b4b1 cfcfcd cfd0ce c8cac9 c2c0be bbbbbb bcbcbc 9b9c9e e0e3e2 e2dfdf c2c4c6 " +
  "a4a3a2 cac9c8 bfc0c5 979898 aca8a5 a3a4a4 9ba0a2 a8a4a1 b5b7b6 a9abab bcbfbe 9b9895 " +
  "a5a7a8 9a9998 a9adb3 b3b1af c0c4c3 b8babb bababa c3c3c3 dfe0e2");
blocks("mosaic-top", 228, 210, 19, 37,
  "fafafa e6e8e9 eeeeee f0f0f0 f0f0f0 f2f4f4 e9eaea ebebeb e6e6e6 e6e8e8 e6e6e6 efefef " +
  "eeeeee e9e9e8 f0f1f0 f1f4f3 f0f0f0 ffffff f5f6f6 f1f1f1 e2e2e2 f3f3f3 f8f8f8 ffffff " +
  "e6e5e5 f3f3f3 f1f1f1 e1e0df e3e3e3 eaeaea e9eaea e2e0df efefef ebebeb f0f0f0 e2e1e0 " +
  "e5e5e5 e6e4e3 e4e6e9 ececea efefef eeeeee ececec eeeeee f7f8f8");
blocks("mosaic-low", 0, 0, 19, 7,
  "cccccc b0b0b0 b6b6b6 e0e0e0 eeeeee e8e8e8 dddddd eeeeee f0f0f0 cfcfcf b4b4b4 a8a8a8 d0d0d0 e4e4e4");
```
